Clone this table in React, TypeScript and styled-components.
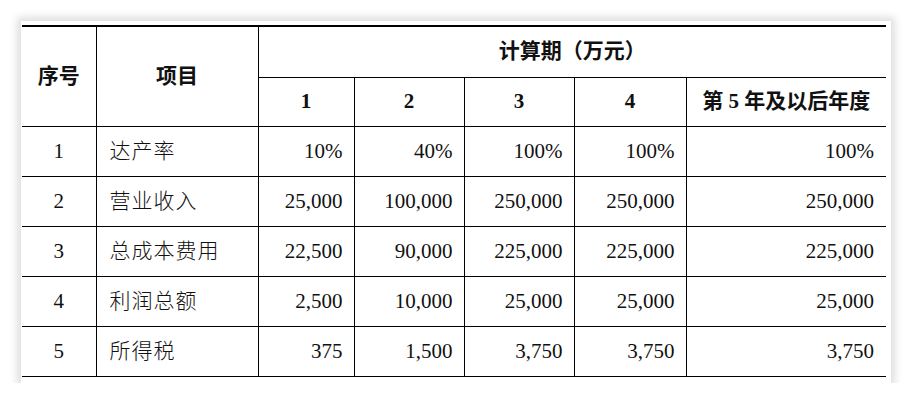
import React from "react";
import styled, { createGlobalStyle } from "styled-components";

const Global = createGlobalStyle`
  html, body { margin: 0; padding: 0; background: #ffffff; }
  body { font-family: "Liberation Serif", "Noto Sans CJK SC", serif; }
`;

const Page = styled.div`
  padding: 21px 0 0 21px;
`;

const Card = styled.div`
  width: 870px;
  box-sizing: border-box;
  padding: 4px 6px 6px 1px;
  background: #ffffff;
  box-shadow: 0 0 8px 4px rgba(0, 0, 0, 0.13);
`;

const Table = styled.table`
  width: 864px;
  table-layout: fixed;
  border-collapse: collapse;
  border-top: 2px solid #000;
  border-bottom: 1px solid #000;
  font-family: "Liberation Serif", "Noto Sans CJK SC", serif;
  font-size: 21px;
  color: #111;
`;

const HeadRow = styled.tr<{ $h: number }>`
  height: ${(p) => p.$h}px;
`;

const Th = styled.th<{ $first?: boolean; $last?: boolean }>`
  font-weight: 700;
  text-align: center;
  vertical-align: middle;
  padding: 0;
  border-bottom: 1px solid #000;
  border-left: ${(p) => (p.$first ? "none" : "1px solid #000")};
  border-right: ${(p) => (p.$last ? "none" : "1px solid #000")};
  line-height: 1;
`;

const BodyRow = styled.tr`
  height: 50px;
`;

const Td = styled.td<{ $align: "left" | "center" | "right"; $cjk?: boolean; $first?: boolean; $last?: boolean }>`
  text-align: ${(p) => p.$align};
  vertical-align: middle;
  padding: ${(p) => (p.$align === "left" ? "0 0 0 13px" : p.$align === "right" ? `0 ${p.$last ? 12 : 11}px 0 0` : "0")};
  border-bottom: 1px solid #000;
  border-left: ${(p) => (p.$first ? "none" : "1px solid #000")};
  border-right: ${(p) => (p.$last ? "none" : "1px solid #000")};
  font-weight: ${(p) => (p.$cjk ? 300 : 400)};
  letter-spacing: ${(p) => (p.$cjk ? "1px" : "0")};
  line-height: 1;
  white-space: nowrap;
`;

const rows = [
  ["1", "达产率", "10%", "40%", "100%", "100%", "100%"],
  ["2", "营业收入", "25,000", "100,000", "250,000", "250,000", "250,000"],
  ["3", "总成本费用", "22,500", "90,000", "225,000", "225,000", "225,000"],
  ["4", "利润总额", "2,500", "10,000", "25,000", "25,000", "25,000"],
  ["5", "所得税", "375", "1,500", "3,750", "3,750", "3,750"],
];

const widths = [74, 162, 96, 110, 110, 112, 200];

export default function App() {
  return (
    <Page>
      <Global />
      <Card>
        <Table>
          <colgroup>
            {widths.map((w, i) => (
              <col key={i} style={{ width: w }} />
            ))}
          </colgroup>
          <thead>
            <HeadRow $h={51}>
              <Th rowSpan={2} $first>序号</Th>
              <Th rowSpan={2}>项目</Th>
              <Th colSpan={5} $last>计算期（万元）</Th>
            </HeadRow>
            <HeadRow $h={49}>
              <Th>1</Th>
              <Th>2</Th>
              <Th>3</Th>
              <Th>4</Th>
              <Th $last>第 5 年及以后年度</Th>
            </HeadRow>
          </thead>
          <tbody>
            {rows.map((r) => (
              <BodyRow key={r[0]}>
                <Td $align="center" $first>{r[0]}</Td>
                <Td $align="left" $cjk>{r[1]}</Td>
                <Td $align="right">{r[2]}</Td>
                <Td $align="right">{r[3]}</Td>
                <Td $align="right">{r[4]}</Td>
                <Td $align="right">{r[5]}</Td>
                <Td $align="right" $last>{r[6]}</Td>
              </BodyRow>
            ))}
          </tbody>
        </Table>
      </Card>
    </Page>
  );
}
